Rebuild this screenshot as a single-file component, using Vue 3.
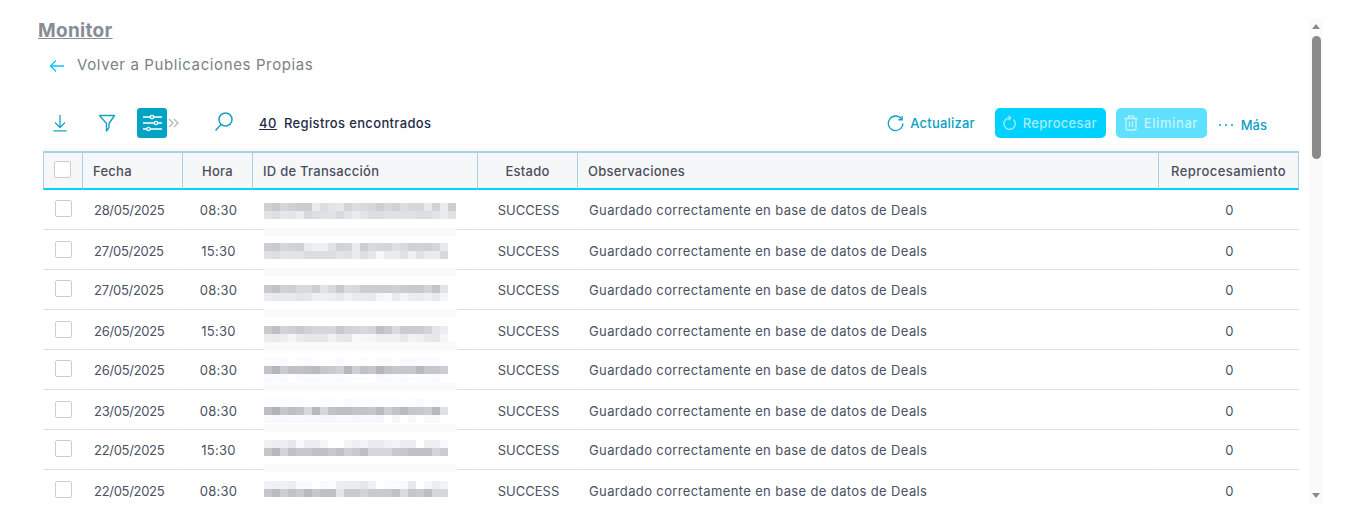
<script setup>
const tint = (hex) => {
  const v = parseInt(hex, 16)
  return `rgb(${v},${Math.min(255, v + 1)},${Math.min(255, v + 4)})`
}
const band = (s) => s.split(' ').map(tint)

const rows = [
  { fecha: '28/05/2025', hora: '08:30', top: 13, strip: 38, wide: true, bands: [
    'd0 c9 d5 d0 cc cc ea dc e3 e6 d3 dc d9 d6 cd d6 d1 dc d6 d6 e8 d2 ea cd',
    'e2 dd e6 e4 eb d8 dd e0 e1 d9 e2 ea e3 dd dd e0 e0 e0 e0 dc dd e2 ea e0'] },
  { fecha: '27/05/2025', hora: '15:30', top: 13, strip: 38, bands: [
    'cd ca d6 d2 cf ea ee ee e2 d2 d4 eb cd d9 d6 d4 df d9 cf d2 cf d5 e9',
    'e0 dd e4 e2 e2 dc dc dc dd e3 e0 ea de e6 f6 ea ea e0 ef e0 ea ea d8'] },
  { fecha: '27/05/2025', hora: '08:30', top: 15, strip: 39, bands: [
    'c9 c1 d0 cd d8 d8 cd e2 d7 c9 da d8 cc cc cc cc cf cb c9 c9 d2 c4 e2',
    'ec e9 e9 e9 e4 e6 ee ee ec e8 f0 ea ea e9 f4 f8 ea f3 ec ea ef e9 f4'] },
  { fecha: '26/05/2025', hora: '15:30', top: 16, strip: 32, bands: [
    'c9 bf d2 cf c9 d0 d5 d5 d6 c8 d1 d4 d8 d4 c0 c8 da cb cb cb d2 e5 ec',
    'eb e9 ed f5 ea e6 e6 e6 f0 e8 e6 f8 f6 f5 ee ee ee e8 f2 ee e8 e6 f4'] },
  { fecha: '26/05/2025', hora: '08:30', top: 8, strip: 33, bands: [
    'fb fb f9 fe fb fa fc ff ff f9 fd ff fb fe fa fa ff f9 f9 fb fb fb fd',
    'c2 b5 ca c0 c0 bd ba c6 c9 d0 b6 cf c0 c6 b5 c0 c6 c6 c6 b8 c6 c6 cd',
    'f9 fa f9 ff fa f9 f9 fb fb f9 fb fd fd fe f8 f9 fb f9 fd fb fb f9 ff'] },
  { fecha: '23/05/2025', hora: '08:30', top: 9, strip: 34, bands: [
    'fc fc fb fc fb fd fd fc fc fd f9 fb fc fb fc fc fc fa fc f9 fe fa fd',
    'bd b2 c6 bd c2 d8 b8 d6 c2 bd bd c2 c2 c6 b9 cd c2 b9 c6 c6 cc b8 e0',
    'f8 f7 f7 f8 f8 f7 f7 f5 f5 f8 f8 f6 f7 f7 f6 ff f6 ff f7 ff f8 f8 fe'] },
  { fecha: '22/05/2025', hora: '15:30', top: 10, strip: 34, bands: [
    'f0 ed ed e6 f8 ec ec f6 ff ff f3 ef f3 eb eb f0 f3 ec ec ff ef ef f8',
    'c5 b8 d3 bf c6 c6 bf bf c8 bf cf c9 be d6 d6 d6 c8 c6 c0 c0 c0 d4 ca'] },
  { fecha: '22/05/2025', hora: '08:30', top: 11, strip: null, bands: [
    'f1 ef f0 ec f9 f9 ff f8 fa ed eb eb e6 f0 ff fa fb f8 e8 ff f5 ed f2',
    'c6 bb ce c1 c9 b9 c7 bf bf e3 c9 c9 d2 c9 c9 c9 c1 da c5 c9 bd d6 d6'] },
].map((r) => ({ ...r, bands: r.bands.map(band) }))
</script>

<template>
  <div class="page">
    <main class="main">
      <h1 class="title">Monitor</h1>
      <div class="back">
        <svg class="back-arrow" width="16" height="14" viewBox="0 0 16 14" fill="none" stroke="#00c8ff" stroke-width="1.3">
          <path d="M15 7H1.5M7 1.5 1.5 7 7 12.5" />
        </svg>
        <span>Volver a Publicaciones Propias</span>
      </div>

      <div class="toolbar">
        <svg class="ic-download" width="16" height="18" viewBox="0 0 16 18" fill="none" stroke="#17a2c4" stroke-width="1.3">
          <path d="M8 1v12M3 8.5 8 13.5l5-5M1.5 16.8h13" />
        </svg>
        <svg class="ic-filter" width="18" height="18" viewBox="0 0 18 18" fill="none" stroke="#17a2c4" stroke-width="1.4">
          <path d="M1.5 1.5h15L11 9.5v4l-2.5 3.5V9.5z" stroke-linejoin="round" />
        </svg>
        <div class="tune">
          <svg width="20" height="18" viewBox="0 0 20 18" fill="none" stroke="#fff" stroke-width="1.3">
            <path d="M1 3h19M1 9h19M1 15h19" />
            <circle cx="10" cy="3" r="1.7" fill="#17a2c4" />
            <circle cx="14" cy="9" r="1.7" fill="#17a2c4" />
            <circle cx="6.500" cy="15" r="1.7" fill="#17a2c4" />
          </svg>
        </div>
        <svg class="ic-chev" width="11" height="10" viewBox="0 0 11 10" fill="none" stroke="#b4b6bc" stroke-width="1.3">
          <path d="M1 1l4 4-4 4M6 1l4 4-4 4" />
        </svg>
        <svg class="ic-search" width="20" height="20" viewBox="0 0 20 20" fill="none" stroke="#17a2c4" stroke-width="1.5">
          <circle cx="11.500" cy="7.500" r="6.500" />
          <path d="M7 12.500 1.500 18.500" />
        </svg>
        <span class="count">40</span>
        <span class="found">Registros encontrados</span>

        <button class="link refresh" type="button">
          <svg width="17" height="17" viewBox="0 0 18 18" fill="none" stroke="#17a2c4" stroke-width="1.4">
            <path d="M15.500 4.500A7.700 7.700 0 1 0 16.800 9" />
            <path d="M16 1v4h-4" />
          </svg>
          <span>Actualizar</span>
        </button>
        <button class="btn reprocess" type="button">
          <svg width="14" height="16" viewBox="0 0 14 16" fill="none" stroke="currentColor" stroke-width="1.300">
            <path d="M10.500 4.500a5.700 5.700 0 1 1-4-1.500" />
            <path d="M5.500 .8 7.800 3 5.500 5.200" />
          </svg>
          <span>Reprocesar</span>
        </button>
        <button class="btn remove" type="button">
          <svg width="14" height="16" viewBox="0 0 14 16" fill="none" stroke="currentColor" stroke-width="1.300">
            <path d="M.5 3.500h13M4.500 3.500V1.200h5v2.300M2 3.500v10.200q0 1.300 1.300 1.300h7.400q1.300 0 1.300-1.300V3.500M5.500 6.500v5.500M8.500 6.500v5.500" />
          </svg>
          <span>Eliminar</span>
        </button>
        <button class="link more" type="button">
          <span class="dots"><i></i><i></i><i></i></span>
          <span class="mas">Más</span>
        </button>
      </div>

      <table class="grid">
        <colgroup>
          <col style="width:40px" /><col style="width:100px" /><col style="width:70px" /><col style="width:225px" />
          <col style="width:100px" /><col style="width:581px" /><col style="width:140px" />
        </colgroup>
        <thead>
          <tr>
            <th class="check-h"><span class="box"></span></th>
            <th class="left">Fecha</th>
            <th>Hora</th>
            <th class="left">ID de Transacción</th>
            <th>Estado</th>
            <th class="left">Observaciones</th>
            <th class="wide">Reprocesamiento</th>
          </tr>
        </thead>
        <tbody>
          <tr v-for="(r, i) in rows" :key="i">
            <td class="check"><span class="box"></span></td>
            <td class="left date">{{ r.fecha }}</td>
            <td class="mid">{{ r.hora }}</td>
            <td class="id">
              <div class="blur" :style="{ top: r.top + 'px' }">
                <div v-for="(b, j) in r.bands" :key="j" class="band">
                  <span v-for="(c, k) in b" :key="k" class="cell" :style="{ background: c }"></span>
                </div>
              </div>
              <div v-if="r.strip !== null" class="strip" :style="{ top: r.strip + 'px' }"></div>
            </td>
            <td class="mid status">SUCCESS</td>
            <td class="left note">Guardado correctamente en base de datos de Deals</td>
            <td class="mid">0</td>
          </tr>
        </tbody>
      </table>
    </main>

    <aside class="scroll">
      <span class="arrow up"></span>
      <span class="thumb"></span>
      <span class="arrow down"></span>
    </aside>
  </div>
</template>

<style scoped>
.page {
  display: flex;
  align-items: flex-start;
  height: 512px;
  overflow: hidden;
  background: #fff;
  font-family: Inter, "Liberation Sans", sans-serif;
  color: #4a5162;
}
.main {
  width: 1309px;
  flex: none;
  padding-top: 19px;
  padding-left: 38px;
  box-sizing: border-box;
}
.title {
  margin: 0;
  font-size: 19px;
  line-height: 24px;
  font-weight: 700;
  color: #878c96;
  text-decoration: underline;
  letter-spacing: 0.3px;
}
.back {
  display: flex;
  align-items: center;
  height: 24px;
  margin-top: 9px;
  padding-left: 11px;
  font-size: 15px;
  color: #7b7f88;
  letter-spacing: 0.62px;
}
.back-arrow {
  margin-right: 12px;
  margin-top: 3px;
}
.toolbar {
  display: flex;
  align-items: center;
  height: 30px;
  margin-top: 32px;
  margin-left: 5px;
  width: 1256px;
  padding-left: 9px;
  box-sizing: border-box;
}
.ic-filter { margin-left: 30px; }
.tune {
  display: flex;
  align-items: center;
  justify-content: center;
  width: 30px;
  height: 30px;
  margin-left: 21px;
  border-radius: 3px;
  background: #00a3c4;
}
.ic-chev { margin-left: 1px; margin-right: 35px; }
.ic-search { margin-top: -2px; }
.count {
  margin-left: 25px;
  font-size: 13px;
  font-weight: 500;
  color: #1f2b46;
  text-decoration: underline;
  letter-spacing: 0.5px;
}
.found {
  margin-left: 7px;
  font-size: 13px;
  font-weight: 500;
  color: #1f2b46;
  letter-spacing: 0.35px;
}
button {
  font: inherit;
  border: 0;
  padding: 0;
  background: none;
  display: flex;
  align-items: center;
}
.link {
  color: #0aa0c2;
  font-size: 13px;
  font-weight: 500;
  letter-spacing: 0.2px;
}
.refresh {
  margin-left: auto;
  margin-right: 20px;
  gap: 6px;
}
.btn {
  height: 30px;
  border-radius: 5px;
  font-size: 13px;
  font-weight: 500;
  gap: 6px;
  box-sizing: border-box;
}
.reprocess {
  width: 111px;
  padding-left: 8px;
  background: #00d1ff;
  color: #a6ecff;
  letter-spacing: 0.3px;
}
.remove {
  width: 91px;
  margin-left: 10px;
  padding-left: 8px;
  background: #5fe0ff;
  color: #c4f4ff;
  letter-spacing: 0.6px;
}
.more {
  margin-left: 12px;
  margin-right: 32px;
  margin-top: 3px;
  gap: 8px;
}
.mas { letter-spacing: 0; }
.dots {
  display: flex;
  gap: 4px;
}
.dots i {
  width: 2px;
  height: 2px;
  border-radius: 50%;
  background: #0aa0c2;
}
.grid {
  width: 1256px;
  margin-top: 13px;
  margin-left: 5px;
  table-layout: fixed;
  border-collapse: separate;
  border-spacing: 0;
  font-size: 13px;
  box-shadow: 0 -3px 0 #fafafa;
}
th {
  height: 39px;
  box-sizing: border-box;
  padding: 0;
  background: #f5f7f9;
  border-top: 2px solid #a9d0e3;
  border-bottom: 2px solid #00d1ff;
  border-right: 1px solid #a9d0e3;
  font-weight: 500;
  font-size: 13px;
  color: #4a4f5c;
  letter-spacing: 0.26px;
  text-align: center;
}
th:first-child { border-left: 1px solid #a9d0e3; }
th.left { text-align: left; padding-left: 10px; }
th.wide { letter-spacing: 0.43px; }
th.check-h { padding-left: 10px; text-align: left; }
th.check-h .box { margin-top: -2px; }
td {
  height: 40px;
  box-sizing: border-box;
  padding: 0;
  border-bottom: 1px solid #dedede;
  border-left: 1px solid #fff;
  letter-spacing: 0.27px;
  color: #4a5162;
  white-space: nowrap;
}
tbody tr:nth-child(even) td { padding-top: 2px; }
tbody tr:last-child td { border-bottom-color: #fff; }
td.left { padding-left: 10px; }
td.mid { text-align: center; }
td.date { letter-spacing: -0.3px; }
td.status { letter-spacing: 0; }
td.note { letter-spacing: 0.37px; }
td.check { padding-left: 11px; }
td.id { position: relative; }
.box {
  display: block;
  width: 17px;
  height: 17px;
  box-sizing: border-box;
  border: 1px solid #cdcdcd;
  border-radius: 2px;
  background: #fff;
  margin-top: -3px;
}
.blur {
  position: absolute;
  left: 10px;
}
.band { display: flex; }
.cell {
  display: block;
  width: 8px;
  height: 8px;
}
.strip {
  position: absolute;
  left: 10px;
  width: 193px;
  height: 8px;
  background: #fafafa;
}
.scroll {
  flex: none;
  position: relative;
  width: 14px;
  height: 486px;
  margin-top: 18px;
  background: #fbfbfb;
}
.thumb {
  position: absolute;
  left: 3px;
  top: 18px;
  width: 9px;
  height: 123px;
  border-radius: 5px;
  background: #8a8a8a;
}
.arrow {
  position: absolute;
  left: 3px;
  width: 0;
  height: 0;
  border-left: 4.5px solid transparent;
  border-right: 4.5px solid transparent;
}
.arrow.up { top: 6px; border-bottom: 5px solid #8a8a8a; }
.arrow.down { top: 475px; border-top: 5px solid #8a8a8a; }
</style>
